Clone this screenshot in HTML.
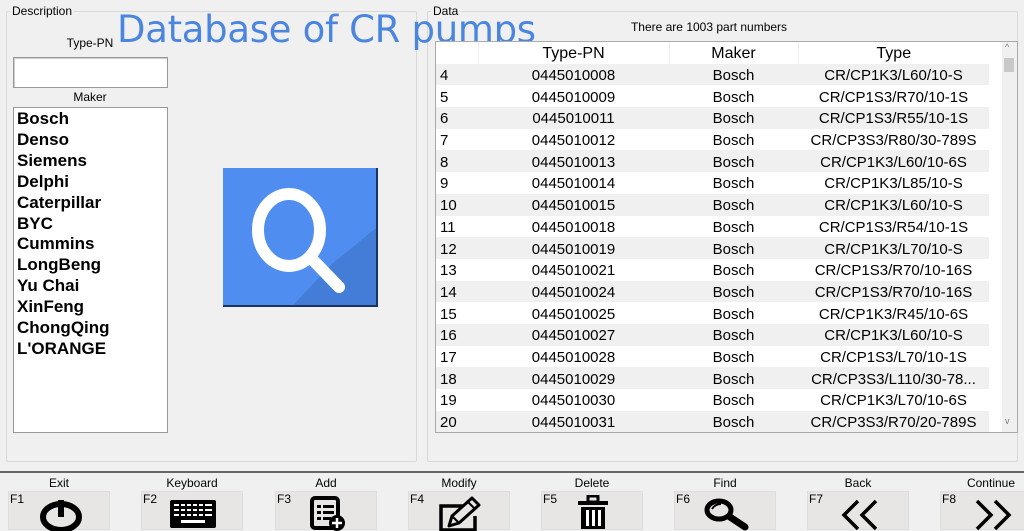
<!DOCTYPE html>
<html><head><meta charset="utf-8"><style>
*{margin:0;padding:0;box-sizing:border-box}
body{width:1024px;height:530px;background:#f0f0f0;font-family:"Liberation Sans",Arial,sans-serif;position:relative;overflow:hidden;color:#000}
.abs{position:absolute}
.grp{position:absolute;border:1px solid #d8d8d8;border-radius:2px}
.lg{position:absolute;font-size:12px;background:#f0f0f0;padding:0 2px}
.lab{position:absolute;font-size:12px;text-align:center}
.maker div{font-weight:bold;font-size:17px;line-height:20.9px;padding-left:3px}
table{border-collapse:collapse;font-size:15px;font-family:"Liberation Sans",Arial,sans-serif}
td{height:21.7px;padding:2px 0 0 0;text-align:center;white-space:nowrap}
tr:nth-child(even) td{background:#f0f0f0}
.btn{position:absolute;top:491px;width:102px;height:39px;background:#e8e5e5;border:1px solid #ddd}
.btn span{position:absolute;left:1px;top:0;font-size:12px}
.bl{position:absolute;top:476px;font-size:12px;width:102px;text-align:center}
</style></head><body>
<div class="grp" style="left:6px;top:11px;width:411px;height:451px"></div>
<div class="lg" style="left:10px;top:4px">Description</div>
<div class="grp" style="left:427px;top:11px;width:591px;height:451px"></div>
<div class="lg" style="left:431px;top:4px">Data</div>
<div class="abs" style="left:117px;top:8px;font-size:37px;color:#4a86e0;line-height:44px;font-family:'DejaVu Sans',sans-serif;letter-spacing:-0.3px">Database of CR pumps</div>
<div class="lab" style="left:40px;top:36px;width:100px">Type-PN</div>
<div class="abs" style="left:13px;top:57px;width:155px;height:31px;background:#fff;border:1px solid #999;box-shadow:inset 1px 1px 0 #ccc"></div>
<div class="lab" style="left:40px;top:90px;width:100px">Maker</div>
<div class="abs maker" style="left:13px;top:107px;width:155px;height:326px;background:#fff;border:1px solid #999;padding-top:1px">
<div>Bosch</div><div>Denso</div><div>Siemens</div><div>Delphi</div><div>Caterpillar</div><div>BYC</div><div>Cummins</div><div>LongBeng</div><div>Yu Chai</div><div>XinFeng</div><div>ChongQing</div><div>L'ORANGE</div></div>
<svg class="abs" style="left:223px;top:168px" width="156" height="140" viewBox="0 0 156 140">
<rect x="0" y="0" width="155" height="139" fill="#1a3560"/>
<rect x="0" y="0" width="153" height="137" fill="#4f8ef0"/>
<path d="M110 95 L153 60 L153 137 L70 137 Z" fill="#437dd8"/>
<ellipse cx="66" cy="62" rx="31" ry="36" fill="none" stroke="#fff" stroke-width="12"/>
<line x1="88" y1="90" x2="116" y2="119" stroke="#fff" stroke-width="12" stroke-linecap="round"/>
</svg>
<div class="abs" style="left:435px;top:20px;width:548px;text-align:center;font-size:12px">There are 1003 part numbers</div>
<div class="abs" style="left:435px;top:41px;width:583px;height:392px;background:#fff;border:1px solid #aaa;overflow:hidden">
<table style="width:553px">
<colgroup><col style="width:42px"><col style="width:191px"><col style="width:129px"><col style="width:191px"></colgroup>
<tr style="font-size:16px"><td style="background:#fff;border-right:1px solid #eee"></td><td style="background:#fff;border-right:1px solid #eee">Type-PN</td><td style="background:#fff;border-right:1px solid #eee">Maker</td><td style="background:#fff">Type</td></tr>
<tr><td style="text-align:left;padding-left:4px">4</td><td>0445010008</td><td>Bosch</td><td>CR/CP1K3/L60/10-S</td></tr>
<tr><td style="text-align:left;padding-left:4px">5</td><td>0445010009</td><td>Bosch</td><td>CR/CP1S3/R70/10-1S</td></tr>
<tr><td style="text-align:left;padding-left:4px">6</td><td>0445010011</td><td>Bosch</td><td>CR/CP1S3/R55/10-1S</td></tr>
<tr><td style="text-align:left;padding-left:4px">7</td><td>0445010012</td><td>Bosch</td><td>CR/CP3S3/R80/30-789S</td></tr>
<tr><td style="text-align:left;padding-left:4px">8</td><td>0445010013</td><td>Bosch</td><td>CR/CP1K3/L60/10-6S</td></tr>
<tr><td style="text-align:left;padding-left:4px">9</td><td>0445010014</td><td>Bosch</td><td>CR/CP1K3/L85/10-S</td></tr>
<tr><td style="text-align:left;padding-left:4px">10</td><td>0445010015</td><td>Bosch</td><td>CR/CP1K3/L60/10-S</td></tr>
<tr><td style="text-align:left;padding-left:4px">11</td><td>0445010018</td><td>Bosch</td><td>CR/CP1S3/R54/10-1S</td></tr>
<tr><td style="text-align:left;padding-left:4px">12</td><td>0445010019</td><td>Bosch</td><td>CR/CP1K3/L70/10-S</td></tr>
<tr><td style="text-align:left;padding-left:4px">13</td><td>0445010021</td><td>Bosch</td><td>CR/CP1S3/R70/10-16S</td></tr>
<tr><td style="text-align:left;padding-left:4px">14</td><td>0445010024</td><td>Bosch</td><td>CR/CP1S3/R70/10-16S</td></tr>
<tr><td style="text-align:left;padding-left:4px">15</td><td>0445010025</td><td>Bosch</td><td>CR/CP1K3/R45/10-6S</td></tr>
<tr><td style="text-align:left;padding-left:4px">16</td><td>0445010027</td><td>Bosch</td><td>CR/CP1K3/L60/10-S</td></tr>
<tr><td style="text-align:left;padding-left:4px">17</td><td>0445010028</td><td>Bosch</td><td>CR/CP1S3/L70/10-1S</td></tr>
<tr><td style="text-align:left;padding-left:4px">18</td><td>0445010029</td><td>Bosch</td><td>CR/CP3S3/L110/30-78...</td></tr>
<tr><td style="text-align:left;padding-left:4px">19</td><td>0445010030</td><td>Bosch</td><td>CR/CP1K3/L70/10-6S</td></tr>
<tr><td style="text-align:left;padding-left:4px">20</td><td>0445010031</td><td>Bosch</td><td>CR/CP3S3/R70/20-789S</td></tr>
</table>
<div class="abs" style="left:566px;top:0;width:16px;height:390px;background:#f0f0f0"></div>
<div class="abs" style="left:568px;top:16px;width:10px;height:14px;background:#c8c8c8"></div>
<div class="abs" style="left:569px;top:0;font-size:9px;color:#777">^</div>
<div class="abs" style="left:569px;top:374px;font-size:9px;color:#777">v</div>
</div>
<div class="abs" style="left:0;top:471px;width:1024px;height:2px;background:#666"></div>
<div class="bl" style="left:8px">Exit</div>
<div class="bl" style="left:141px">Keyboard</div>
<div class="bl" style="left:275px">Add</div>
<div class="bl" style="left:408px">Modify</div>
<div class="bl" style="left:541px">Delete</div>
<div class="bl" style="left:674px">Find</div>
<div class="bl" style="left:807px">Back</div>
<div class="bl" style="left:940px">Continue</div>
<div class="btn" style="left:8px"><span>F1</span><svg class="abs" style="left:30px;top:6px" width="44" height="33"><ellipse cx="22" cy="19" rx="18" ry="13" fill="none" stroke="#000" stroke-width="6"/><line x1="22" y1="2" x2="22" y2="19" stroke="#000" stroke-width="6"/></svg></div>
<div class="btn" style="left:141px"><span>F2</span><svg class="abs" style="left:28px;top:8px" width="46" height="28"><rect x="0" y="0" width="46" height="28" rx="2" fill="#000"/><g fill="#fff"><rect x="4" y="4" width="38" height="2"/><rect x="4" y="9" width="38" height="2"/><rect x="4" y="14" width="38" height="2"/><rect x="11" y="20" width="24" height="3"/></g><g fill="#000"><rect x="9" y="3" width="2" height="14"/><rect x="15" y="3" width="2" height="14"/><rect x="21" y="3" width="2" height="14"/><rect x="27" y="3" width="2" height="14"/><rect x="33" y="3" width="2" height="14"/></g></svg></div>
<div class="btn" style="left:275px"><span>F3</span><svg class="abs" style="left:34px;top:4px" width="36" height="35"><rect x="2" y="2" width="26" height="30" rx="3" fill="none" stroke="#000" stroke-width="4"/><g fill="#000"><rect x="7" y="9" width="4" height="3"/><rect x="13" y="9" width="11" height="3"/><rect x="7" y="15" width="4" height="3"/><rect x="13" y="15" width="11" height="3"/><rect x="7" y="21" width="4" height="3"/><rect x="13" y="21" width="8" height="3"/></g><circle cx="27" cy="27" r="8" fill="#000"/><path d="M27 22v10M22 27h10" stroke="#fff" stroke-width="2.5"/></svg></div>
<div class="btn" style="left:408px"><span>F4</span><svg class="abs" style="left:30px;top:4px" width="44" height="35"><path d="M26 10 H2 V34 H36 V20" fill="none" stroke="#000" stroke-width="3.5"/><path d="M10 30 L13 20 L33 2 L40 9 L20 27 Z" fill="#e8e5e5" stroke="#000" stroke-width="3" stroke-linejoin="round"/><path d="M13 20 L20 27 M29 6 L36 13" stroke="#000" stroke-width="2"/></svg></div>
<div class="btn" style="left:541px"><span>F5</span><svg class="abs" style="left:34px;top:3px" width="36" height="36"><rect x="2" y="6" width="30" height="4" fill="#000"/><rect x="12" y="1" width="10" height="6" fill="none" stroke="#000" stroke-width="3"/><path d="M5 12 H29 V34 H5 Z" fill="#000"/><g fill="#fff"><rect x="10" y="15" width="3" height="16"/><rect x="16" y="15" width="3" height="16"/><rect x="22" y="15" width="3" height="16"/></g></svg></div>
<div class="btn" style="left:674px"><span>F6</span><svg class="abs" style="left:28px;top:6px" width="48" height="33"><ellipse cx="16" cy="12" rx="12" ry="9" fill="none" stroke="#000" stroke-width="5"/><path d="M9 11 Q12 6 18 6" stroke="#000" stroke-width="2" fill="none"/><line x1="27" y1="19" x2="42" y2="29" stroke="#000" stroke-width="7" stroke-linecap="round"/></svg></div>
<div class="btn" style="left:807px"><span>F7</span><svg class="abs" style="left:32px;top:7px" width="40" height="32"><path d="M18 2 L4 16 L18 30 M36 2 L22 16 L36 30" fill="none" stroke="#000" stroke-width="3.5"/></svg></div>
<div class="btn" style="left:940px;width:90px"><span>F8</span><svg class="abs" style="left:32px;top:7px" width="40" height="32"><path d="M4 2 L18 16 L4 30 M22 2 L36 16 L22 30" fill="none" stroke="#000" stroke-width="3.5"/></svg></div>
</body></html>
